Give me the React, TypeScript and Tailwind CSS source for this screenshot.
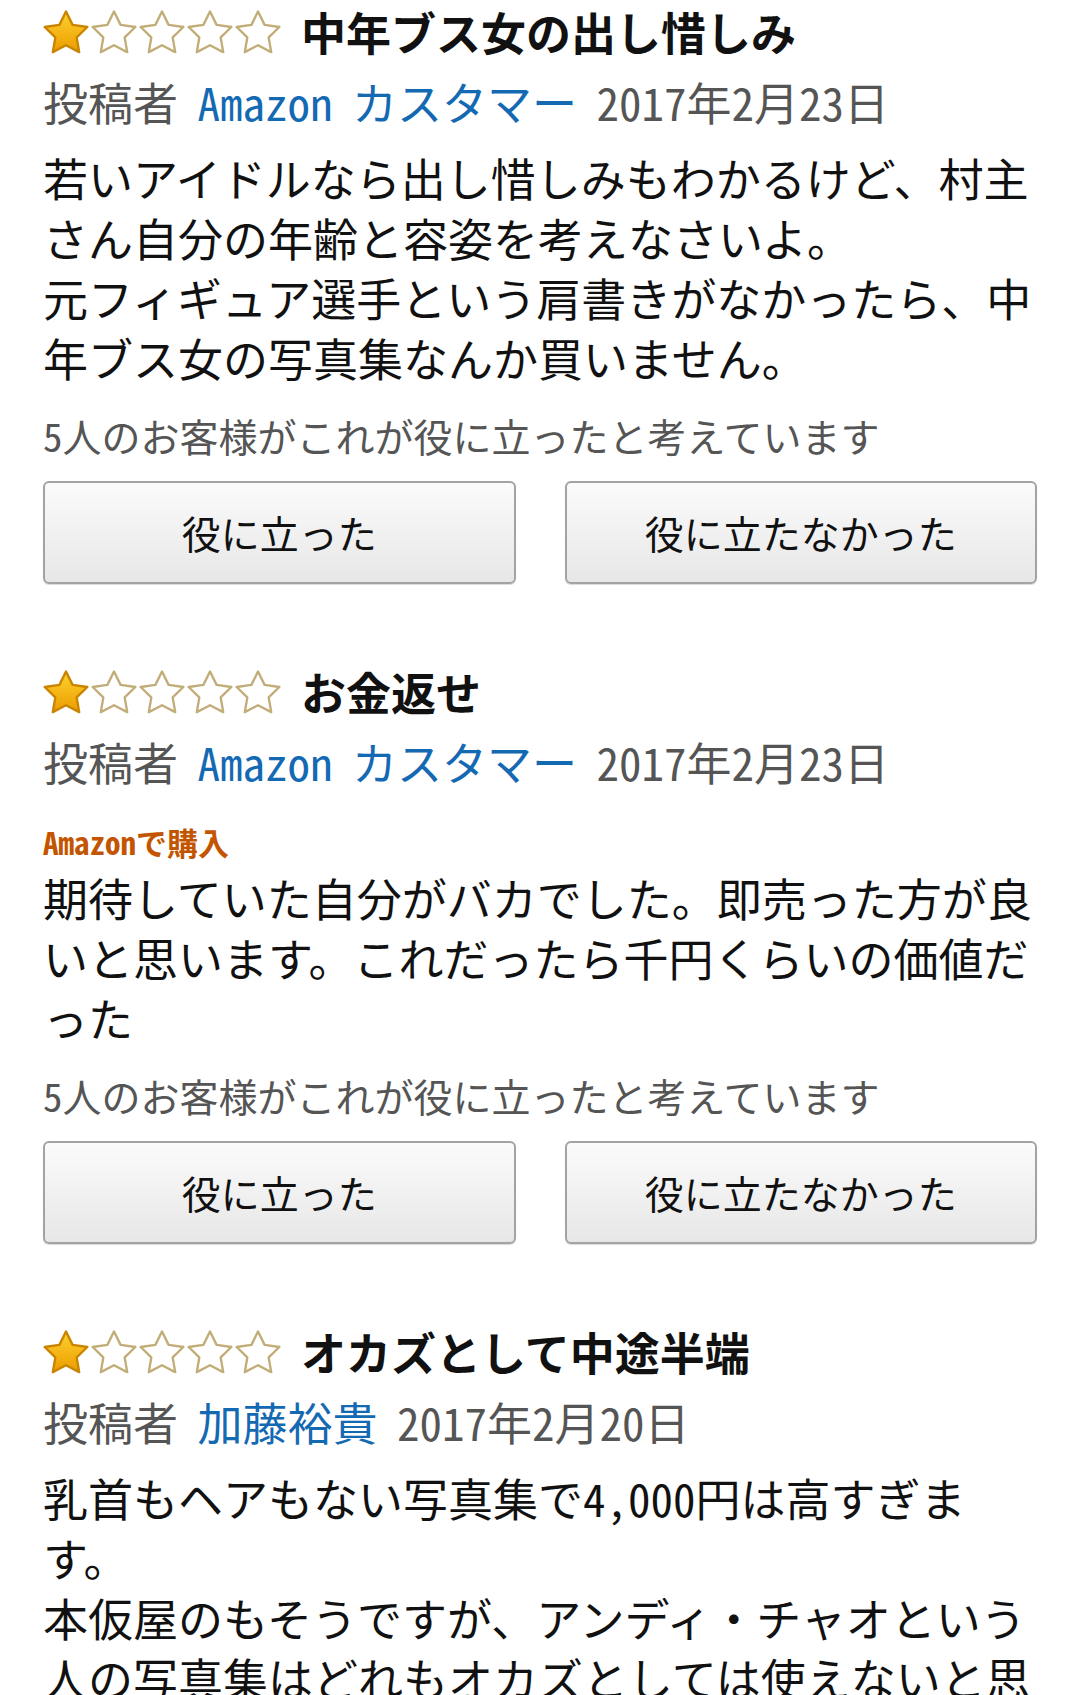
import React from "react";

type Review = {
  title: string;
  author: string;
  date: string;
  verified?: boolean;
  body: string[];
  helpful?: string;
};

const reviews: Review[] = [
  {
    title: "中年ブス女の出し惜しみ",
    author: "Amazon カスタマー",
    date: "2017年2月23日",
    body: [
      "若いアイドルなら出し惜しみもわかるけど、村主さん自分の年齢と容姿を考えなさいよ。",
      "元フィギュア選手という肩書きがなかったら、中年ブス女の写真集なんか買いません。",
    ],
    helpful: "5人のお客様がこれが役に立ったと考えています",
  },
  {
    title: "お金返せ",
    author: "Amazon カスタマー",
    date: "2017年2月23日",
    verified: true,
    body: [
      "期待していた自分がバカでした。即売った方が良いと思います。これだったら千円くらいの価値だった",
    ],
    helpful: "5人のお客様がこれが役に立ったと考えています",
  },
  {
    title: "オカズとして中途半端",
    author: "加藤裕貴",
    date: "2017年2月20日",
    body: [
      "乳首もヘアもない写真集で4,000円は高すぎます。",
      "本仮屋のもそうですが、アンディ・チャオという人の写真集はどれもオカズとしては使えないと思います。",
    ],
  },
];

const Star = ({ filled }: { filled: boolean }) => (
  <svg viewBox="1.4 1.3 21.2 20.6" className="w-[46px] h-[44px]">
    <defs>
      <linearGradient id="starGold" x1="0" y1="0" x2="0" y2="1">
        <stop offset="0%" stopColor="#ffd22e" />
        <stop offset="100%" stopColor="#eb9c00" />
      </linearGradient>
    </defs>
    <polygon
      points="12,2 15.09,8.26 22,9.27 17,14.14 18.18,21.02 12,17.77 5.82,21.02 7,14.14 2,9.27 8.91,8.26"
      fill={filled ? "url(#starGold)" : "#ffffff"}
      stroke={filled ? "#c98400" : "#c2ad78"}
      strokeWidth="1.1"
      strokeLinejoin="round"
    />
  </svg>
);

const Stars = ({ rating }: { rating: number }) => (
  <div className="flex flex-row gap-[2px]">
    {[1, 2, 3, 4, 5].map((n) => (
      <Star key={n} filled={n <= rating} />
    ))}
  </div>
);

const VoteButton = ({ label }: { label: string }) => (
  <button className="h-[103px] border-2 border-[#a3a3a3] rounded-[6px] bg-gradient-to-b from-[#fbfbfb] to-[#e7e7e7] text-[39px] text-[#111] shadow-[0_1px_1px_rgba(0,0,0,0.15)]">
    {label}
  </button>
);

const ReviewItem = ({ review }: { review: Review }) => (
  <div className="flex flex-col">
    <div className="flex flex-row items-center h-[60px]">
      <Stars rating={1} />
      <span className="ml-[20px] text-[45px] font-bold text-[#111]">
        {review.title}
      </span>
    </div>
    <div className="mt-[10px] text-[45px] leading-[60px] text-[#555] [word-spacing:-3px]">
      投稿者 <span className="text-[#1469b3]">{review.author}</span>{" "}
      {review.date}
    </div>
    {review.verified && (
      <div className="mt-[30px] text-[31px] leading-[40px] font-bold text-[#c45500]">
        Amazonで購入
      </div>
    )}
    <div
      className={
        (review.verified ? "mt-[6px]" : "mt-[16px]") +
        " text-[45px] leading-[60px] text-[#111]"
      }
    >
      {review.body.map((p, i) => (
        <p key={i}>{p}</p>
      ))}
    </div>
    {review.helpful && (
      <>
        <div className="mt-[22px] text-[39px] leading-[50px] text-[#555]">
          {review.helpful}
        </div>
        <div className="mt-[21px] grid grid-cols-2 gap-[49px]">
          <VoteButton label="役に立った" />
          <VoteButton label="役に立たなかった" />
        </div>
      </>
    )}
  </div>
);

export default function App() {
  return (
    <div className="min-h-screen bg-white px-[43px] pt-[2px] font-['Noto_Sans_CJK_JP','Noto_Sans',sans-serif] [font-feature-settings:'hwid']">
      <div className="flex flex-col gap-[78px]">
        {reviews.map((r, i) => (
          <ReviewItem key={i} review={r} />
        ))}
      </div>
    </div>
  );
}
